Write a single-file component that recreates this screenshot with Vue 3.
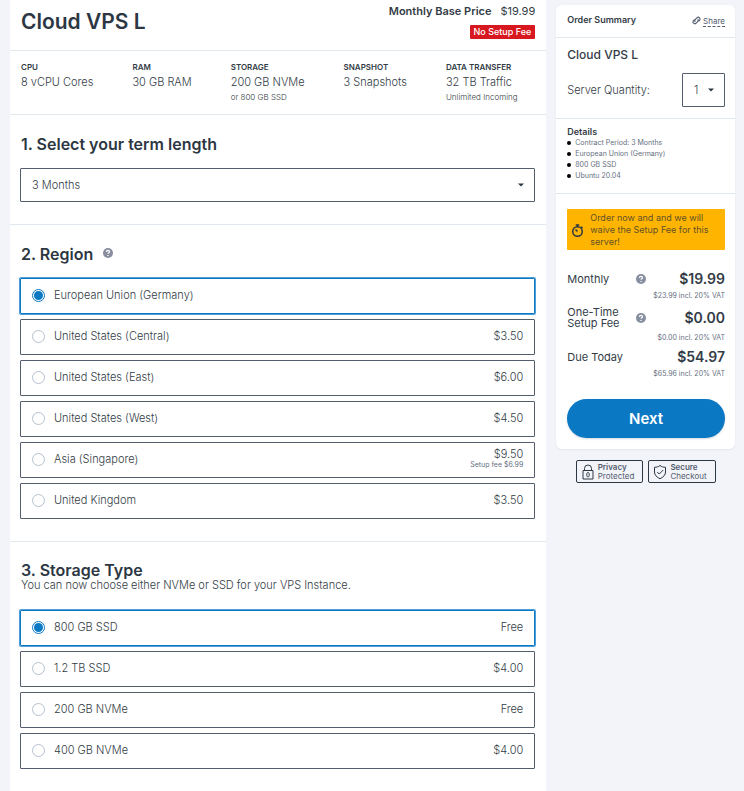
<script setup>
import { ref } from 'vue'

const specs = [
  { label: 'CPU', value: '8 vCPU Cores' },
  { label: 'RAM', value: '30 GB RAM' },
  { label: 'STORAGE', value: '200 GB NVMe', note: 'or 800 GB SSD' },
  { label: 'SNAPSHOT', value: '3 Snapshots' },
  { label: 'DATA TRANSFER', value: '32 TB Traffic', note: 'Unlimited Incoming' },
]

const regions = [
  { id: 'eu', name: 'European Union (Germany)' },
  { id: 'us-central', name: 'United States (Central)', price: '$3.50' },
  { id: 'us-east', name: 'United States (East)', price: '$6.00' },
  { id: 'us-west', name: 'United States (West)', price: '$4.50' },
  { id: 'asia', name: 'Asia (Singapore)', price: '$9.50', note: 'Setup fee $6.99' },
  { id: 'uk', name: 'United Kingdom', price: '$3.50' },
]

const storages = [
  { id: 'ssd-800', name: '800 GB SSD', price: 'Free' },
  { id: 'ssd-1200', name: '1.2 TB SSD', price: '$4.00' },
  { id: 'nvme-200', name: '200 GB NVMe', price: 'Free' },
  { id: 'nvme-400', name: '400 GB NVMe', price: '$4.00' },
]

const details = ['Contract Period: 3 Months', 'European Union (Germany)', '800 GB SSD', 'Ubuntu 20.04']

const totals = [
  { label: 'Monthly', help: true, price: '$19.99', vat: '$23.99 incl. 20% VAT' },
  { label: 'One-Time Setup Fee', help: true, price: '$0.00', vat: '$0.00 incl. 20% VAT' },
  { label: 'Due Today', help: false, price: '$54.97', vat: '$65.96 incl. 20% VAT' },
]

const term = ref('3')
const quantity = ref('1')
const region = ref('eu')
const storage = ref('ssd-800')
</script>

<template>
  <div class="page">
    <main class="config">
      <header class="head">
        <h1>Cloud VPS L</h1>
        <div class="base">
          <p><strong>Monthly Base Price</strong><span>$19.99</span></p>
          <span class="tag">No Setup Fee</span>
        </div>
      </header>

      <dl class="specs">
        <div v-for="s in specs" :key="s.label">
          <dt>{{ s.label }}</dt>
          <dd>{{ s.value }}</dd>
          <dd v-if="s.note" class="note">{{ s.note }}</dd>
        </div>
      </dl>

      <section class="block">
        <h2><label for="term">1. Select your term length</label></h2>
        <div class="select-box term">
          <select id="term" v-model="term">
            <option value="1">1 Month</option>
            <option value="3">3 Months</option>
            <option value="6">6 Months</option>
            <option value="12">12 Months</option>
          </select>
          <svg class="caret" viewBox="0 0 6 4" aria-hidden="true"><path d="M0 0.5h6L3 3.5z" /></svg>
        </div>
      </section>

      <section class="block">
        <h2 id="region-title">
          2. Region
          <svg class="help" viewBox="0 0 16 16" aria-hidden="true">
            <circle cx="8" cy="8" r="8" />
            <path d="M5.6 6.3C5.6 4.7 6.7 3.9 8 3.9s2.4 0.8 2.4 2.1c0 1.7-2.3 1.7-2.3 3.3M8 11v1.9" />
          </svg>
        </h2>
        <div class="options" role="radiogroup" aria-labelledby="region-title">
          <label v-for="r in regions" :key="r.id" class="option" :class="{ picked: region === r.id }">
            <input v-model="region" type="radio" name="region" :value="r.id" />
            <span class="name">{{ r.name }}</span>
            <span class="price">{{ r.price }}<small v-if="r.note">{{ r.note }}</small></span>
          </label>
        </div>
      </section>

      <section class="block">
        <h2 id="storage-title" class="tight">3. Storage Type</h2>
        <p class="hint">You can now choose either NVMe or SSD for your VPS Instance.</p>
        <div class="options" role="radiogroup" aria-labelledby="storage-title">
          <label v-for="s in storages" :key="s.id" class="option" :class="{ picked: storage === s.id }">
            <input v-model="storage" type="radio" name="storage" :value="s.id" />
            <span class="name">{{ s.name }}</span>
            <span class="price">{{ s.price }}</span>
          </label>
        </div>
      </section>
    </main>

    <aside class="side">
      <div class="card">
        <div class="card-head">
          <h3>Order Summary</h3>
          <a href="#share" class="share">
            <svg viewBox="0 0 16 16" aria-hidden="true">
              <path d="M6 10.500a3.200 3.200 0 0 1 0-4.500l3-3a3.200 3.200 0 0 1 4.500 4.500l-2 2M10 5.500a3.200 3.200 0 0 1 0 4.500l-3 3a3.200 3.200 0 0 1-4.500-4.500l2-2" />
            </svg>
            <span>Share</span>
          </a>
        </div>

        <div class="product">
          <h4>Cloud VPS L</h4>
          <div class="quantity">
            <label for="quantity">Server Quantity:</label>
            <div class="select-box count">
              <select id="quantity" v-model="quantity">
                <option>1</option>
                <option>2</option>
                <option>3</option>
              </select>
              <svg class="caret" viewBox="0 0 6 4" aria-hidden="true"><path d="M0 0.5h6L3 3.5z" /></svg>
            </div>
          </div>
        </div>

        <div class="details">
          <h5>Details</h5>
          <ul>
            <li v-for="d in details" :key="d">{{ d }}</li>
          </ul>
        </div>

        <div class="checkout">
          <div class="promo">
            <svg viewBox="0 0 26 26" aria-hidden="true">
              <circle cx="13" cy="15" r="9.5" />
              <path d="M9.5 2h7M13 2v3.5M20.5 5.5l2.5 2.5M13 15l-4-4" />
            </svg>
            <p>Order now and and we will waive the Setup Fee for this server!</p>
          </div>

          <div class="totals">
            <div v-for="t in totals" :key="t.label" class="total">
              <span class="total-label">{{ t.label }}</span>
              <svg v-if="t.help" class="help" viewBox="0 0 16 16" aria-hidden="true">
                <circle cx="8" cy="8" r="8" />
                <path d="M5.6 6.3C5.6 4.7 6.7 3.9 8 3.9s2.4 0.8 2.4 2.1c0 1.7-2.3 1.7-2.3 3.3M8 11v1.9" />
              </svg>
              <strong>{{ t.price }}</strong>
              <small>{{ t.vat }}</small>
            </div>
          </div>

          <button type="button" class="next">Next</button>
        </div>
      </div>

      <div class="badges">
        <div class="badge">
          <svg viewBox="0 0 24 32" aria-hidden="true">
            <path d="M2 13h20v17H2zM5 13V9a7 7 0 0 1 14 0v4" />
            <path d="M12 17c-1.700 0-2.500 1.600-2.500 4.500s0.800 4.500 2.500 4.500 2.500-1.600 2.500-4.500-0.800-4.500-2.500-4.500z" />
          </svg>
          <p><strong>Privacy</strong>Protected</p>
        </div>
        <div class="badge">
          <svg viewBox="0 0 24 32" aria-hidden="true">
            <path d="M12 3c3 2.5 6.500 3.500 11 3.500V16c0 6-4 10-11 13.500C5 26 1 22 1 16V6.500C5.500 6.500 9 5.500 12 3z" />
            <path d="M6.500 16l4 4 8-8" />
          </svg>
          <p><strong>Secure</strong>Checkout</p>
        </div>
      </div>
    </aside>
  </div>
</template>

<style>
body {
  background: #f3f4f9;
}
</style>

<style scoped>
.page {
  display: grid;
  grid-template-columns: minmax(0, 3fr) minmax(0, 1fr);
  gap: 10px;
  min-height: 100vh;
  padding: 0 9px 0 10px;
  box-sizing: border-box;
  font-family: Inter, 'Liberation Sans', sans-serif;
  font-size: 11px;
  line-height: 16px;
  font-weight: 300;
  color: #333c46;
}

.page *,
.page *::before {
  box-sizing: border-box;
}

h1, h2, h3, h4, h5, p, dl, dd, ul {
  margin: 0;
  padding: 0;
}

.config {
  background: #fff;
}

.head {
  display: flex;
  justify-content: space-between;
  align-items: flex-start;
  height: 51px;
  padding: 3px 11px 0;
  border-bottom: 1px solid #e1e8ef;
}

h1 {
  padding-top: 5px;
  font-size: 21px;
  line-height: 28px;
  font-weight: 600;
  color: #2d3743;
}

.base {
  text-align: right;
}

.base strong {
  margin-right: 9px;
  font-weight: 600;
}

.base span {
  font-weight: 400;
}

.base .tag {
  display: inline-block;
  margin-top: 6px;
  padding: 0 4px;
  border-radius: 1px;
  background: #d81820;
  color: #fff;
  font-size: 9px;
  line-height: 14px;
  font-weight: 500;
  vertical-align: top;
}

.specs {
  display: flex;
  gap: 39px;
  padding: 9px 11px 10px;
  border-bottom: 1px solid #e1e8ef;
  white-space: nowrap;
}

.specs dt {
  font-size: 8px;
  line-height: 14px;
  font-weight: 600;
}

.specs .note {
  font-size: 8px;
  line-height: 14px;
}

.block {
  padding: 19px 11px 22px 10px;
  border-bottom: 1px solid #e1e8ef;
}

.block:last-child {
  border-bottom: 0;
}

h2 {
  display: flex;
  align-items: center;
  gap: 10px;
  margin-bottom: 14px;
  padding-left: 1px;
  font-size: 16px;
  line-height: 20px;
  font-weight: 600;
  color: #2d3743;
}

h2.tight {
  margin-bottom: 0;
  line-height: 18px;
}

.hint {
  margin-bottom: 19px;
  padding-left: 1px;
  line-height: 12px;
}

.help {
  flex: none;
  width: 10px;
  height: 10px;
  margin-bottom: 3px;
}

.help circle {
  fill: #868e9f;
}

.help path {
  fill: none;
  stroke: #fff;
  stroke-width: 2;
}

.select-box {
  display: grid;
  align-items: center;
}

.select-box select,
.select-box .caret {
  grid-area: 1 / 1;
}

.select-box select {
  width: 100%;
  height: 34px;
  padding: 0 11px;
  appearance: none;
  border: 1px solid #535d6e;
  border-radius: 1px;
  background: #fff;
  color: inherit;
  font: inherit;
}

.caret {
  justify-self: end;
  width: 6px;
  height: 4px;
  margin-right: 11px;
  fill: #2d3743;
  pointer-events: none;
}

.options {
  display: grid;
  gap: 5px;
}

.option {
  display: flex;
  align-items: center;
  height: 36px;
  padding: 0 11px 2px;
  border: 1px solid #535d6e;
  border-radius: 1px;
}

.option.picked {
  border-color: #0b78c4;
  box-shadow: 0 0 0 1px #4f9fd6;
}

.option input {
  display: grid;
  place-items: center;
  width: 13px;
  height: 13px;
  margin: 0 9px 0 0;
  appearance: none;
  border: 1px solid #b4c1ce;
  border-radius: 50%;
}

.option input:checked {
  border-color: #0b78c4;
}

.option input:checked::before {
  content: '';
  width: 9px;
  height: 9px;
  border-radius: 50%;
  background: #0b78c4;
}

.price {
  margin-left: auto;
  text-align: right;
  line-height: 12px;
}

.price small {
  display: block;
  color: #667080;
  font-size: 7px;
  line-height: 10px;
  font-weight: 400;
}

.side {
  padding-top: 5px;
}

.card {
  border-radius: 6px;
  background: #fff;
  box-shadow: 0 1px 2px rgba(40, 60, 90, 0.08);
}

.card-head {
  display: flex;
  justify-content: space-between;
  align-items: center;
  height: 33px;
  padding: 0 10px 2px 11px;
  border-bottom: 1px solid #e1e8ef;
}

.card-head h3 {
  font-size: 9px;
  font-weight: 600;
}

.share {
  display: flex;
  align-items: center;
  gap: 2px;
  padding-top: 2px;
  color: #535d6e;
  font-size: 8px;
  line-height: 10px;
  font-weight: 400;
  text-decoration: none;
}

.share svg {
  width: 9px;
  height: 9px;
  margin-bottom: 2px;
  fill: none;
  stroke: #535d6e;
  stroke-width: 2;
}

.share span {
  border-bottom: 1px dashed #535d6e;
}

.product {
  padding: 9px 10px 11px 11px;
  border-bottom: 1px solid #e1e8ef;
}

.product h4 {
  font-size: 12px;
  font-weight: 500;
}

.quantity {
  display: flex;
  justify-content: space-between;
  align-items: center;
  margin-top: 10px;
}

.select-box.count {
  width: 43px;
}

.details {
  padding: 8px 10px 11px 11px;
  border-bottom: 1px solid #e1e8ef;
}

.details h5 {
  font-size: 9px;
  line-height: 10px;
  font-weight: 600;
}

.details ul {
  padding-bottom: 1px;
  list-style: none;
}

.details li {
  display: flex;
  align-items: center;
  gap: 4px;
  color: #667080;
  font-size: 7px;
  line-height: 11px;
  font-weight: 400;
}

.details li::before {
  content: '';
  width: 4px;
  height: 4px;
  margin-top: 1px;
  border-radius: 50%;
  background: #000;
}

.checkout {
  padding: 15px 10px 11px 11px;
}

.promo {
  display: flex;
  align-items: center;
  gap: 6px;
  padding: 3px 4px 2px;
  border-radius: 1px;
  background: #ffb500;
  color: #5f512a;
  font-size: 9px;
  line-height: 12px;
  font-weight: 400;
}

.promo svg {
  flex: none;
  width: 13px;
  height: 13px;
  fill: none;
  stroke: #2d3743;
  stroke-width: 3;
}

.totals {
  display: grid;
  gap: 2px;
  margin-top: 17px;
}

.total {
  display: grid;
  grid-template-columns: 60px 10px 1fr;
  column-gap: 9px;
  align-items: center;
}

.total-label {
  padding: 4px 0;
  font-weight: 400;
  line-height: 11px;
}

.total .help {
  margin: 0;
}

.total strong {
  grid-column: 3;
  font-size: 14px;
  line-height: 24px;
  font-weight: 600;
  text-align: right;
}

.total small {
  grid-column: 1 / -1;
  color: #667080;
  font-size: 7px;
  line-height: 10px;
  font-weight: 400;
  text-align: right;
}

.next {
  width: 100%;
  height: 39px;
  margin-top: 20px;
  border: 0;
  border-radius: 20px;
  background: #0b78c4;
  box-shadow: 0 1px 2px rgba(40, 60, 90, 0.2);
  color: #fff;
  font: inherit;
  font-size: 15px;
  font-weight: 600;
}

.badges {
  display: flex;
  justify-content: center;
  gap: 5px;
  margin-top: 11px;
}

.badge {
  display: flex;
  align-items: center;
  gap: 4px;
  height: 23px;
  padding: 0 8px 0 5px;
  border: 1px solid #2d3743;
  border-radius: 2px;
  color: #535d6e;
  font-size: 8px;
  line-height: 9px;
  font-weight: 400;
}

.badge svg {
  width: 12px;
  height: 16px;
  fill: none;
  stroke: #2d3743;
  stroke-width: 2;
}

.badge strong {
  display: block;
  font-weight: 600;
}
</style>
